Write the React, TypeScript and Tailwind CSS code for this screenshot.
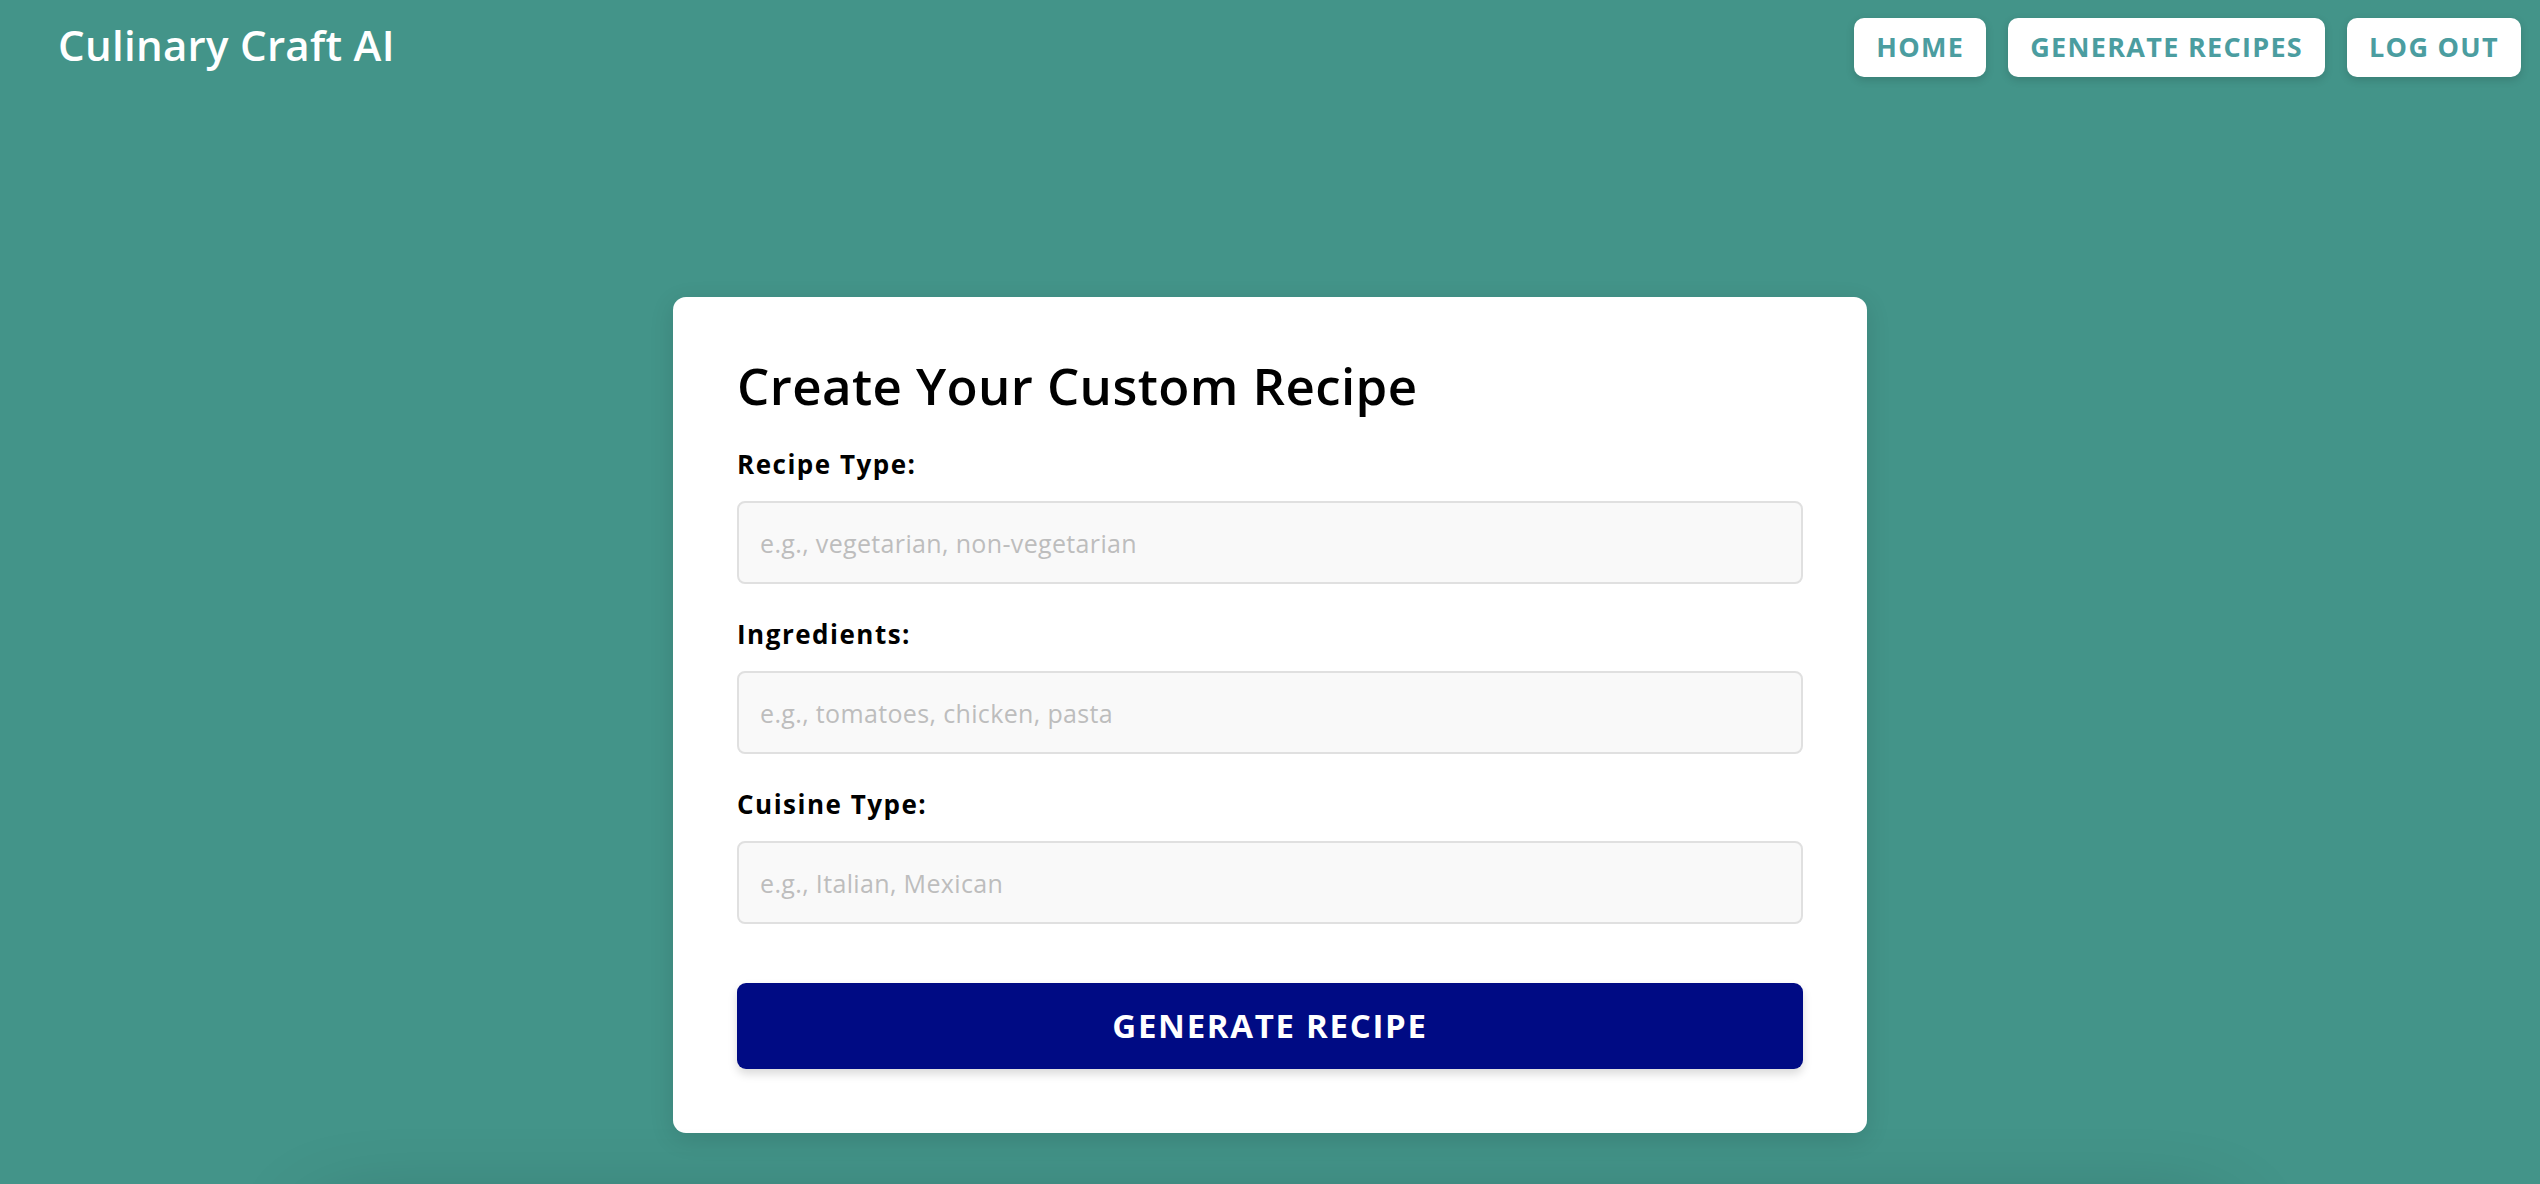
import React from "react";

function Field({ label, placeholder }: { label: string; placeholder: string }) {
  return (
    <div className="flex flex-col">
      <label className="text-[26px] leading-[30px] font-bold tracking-[1.5px] text-black">{label}</label>
      <input
        type="text"
        placeholder={placeholder}
        className="mt-[22px] h-[83px] w-full rounded-[8px] border-2 border-[#e0e0e0] bg-[#f9f9f9] px-[21px] text-[25px] tracking-[0.35px] text-black outline-none placeholder:text-[#bdbdbd]"
      />
    </div>
  );
}

export default function App() {
  return (
    <div
      className="min-h-screen w-full bg-[#439489] overflow-hidden"
      style={{ fontFamily: '"Open Sans", "Liberation Sans", sans-serif' }}
    >
      <header className="flex h-[95px] items-center justify-between pl-[58px] pr-[19px]">
        <div className="pb-[6px] text-[42px] font-semibold leading-none tracking-[0.3px] text-white">Culinary Craft AI</div>
        <nav className="flex items-center gap-[22px]">
          {["HOME", "GENERATE RECIPES", "LOG OUT"].map((t) => (
            <button
              key={t}
              className="flex h-[59px] items-center rounded-[10px] bg-white px-[22px] text-[27px] font-bold tracking-[1.3px] text-[#4b9da0] shadow-[0_3px_8px_rgba(0,0,0,0.15)]"
            >
              {t}
            </button>
          ))}
        </nav>
      </header>

      <main className="flex flex-col items-center">
        <div className="mt-[202px] w-[1194px] rounded-[13px] bg-white p-[64px] shadow-[0_6px_24px_rgba(0,0,0,0.12)]">
          <h1 className="text-[51px] font-semibold leading-[49px] tracking-[0.4px] text-black">Create Your Custom Recipe</h1>
          <div className="mt-[39px] flex flex-col gap-[35px]">
            <Field label="Recipe Type:" placeholder="e.g., vegetarian, non-vegetarian" />
            <Field label="Ingredients:" placeholder="e.g., tomatoes, chicken, pasta" />
            <Field label="Cuisine Type:" placeholder="e.g., Italian, Mexican" />
          </div>
          <button className="mt-[59px] flex h-[86px] w-full items-center justify-center rounded-[9px] bg-[#000b84] text-[33px] font-bold tracking-[1.7px] text-white shadow-[0_5px_10px_rgba(0,0,0,0.15)]">
            GENERATE RECIPE
          </button>
        </div>
        <div className="mt-[90px] h-[300px] w-[1900px] rounded-[20px] bg-[#439489] shadow-[0_0_90px_rgba(0,0,0,0.3)]"></div>
      </main>
    </div>
  );
}
